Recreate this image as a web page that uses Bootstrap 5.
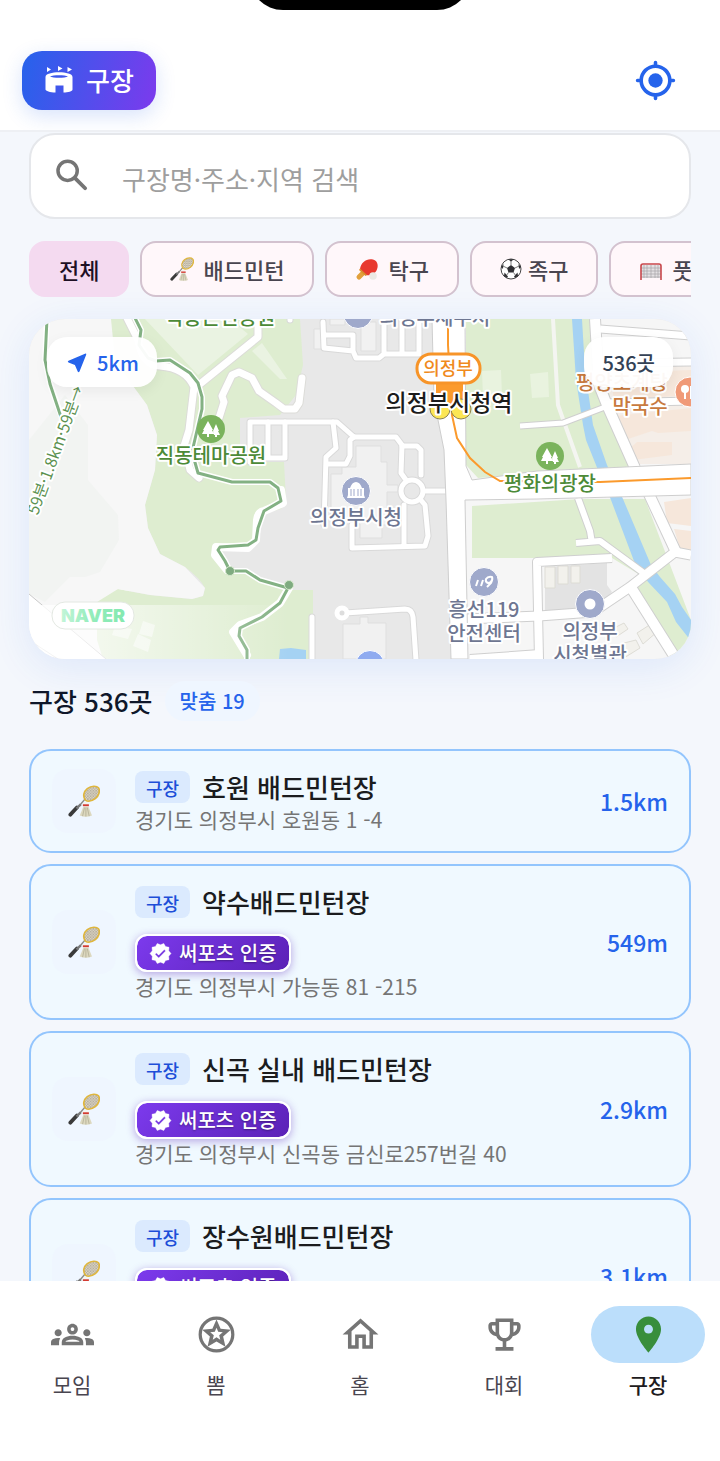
<!DOCTYPE html>
<html lang="ko">
<head>
<meta charset="utf-8">
<meta name="viewport" content="width=device-width, initial-scale=1">
<title>구장</title>
<link href="https://cdn.jsdelivr.net/npm/bootstrap@5.3.0/dist/css/bootstrap.min.css" rel="stylesheet">
<style>
  body { font-family: "Noto Sans CJK KR", sans-serif; background: #f4f7fc; color: #0f172a; }
  .app-header { height: 132px; padding: 30px 22px 0; border-bottom: 2px solid #eef0f4; }
  .notch { top: -58px; width: 222px; height: 68px; border-radius: 34px; background: #000; }
  .brand-btn { height: 59px; padding: 0 22px; gap: 12px; border: 0; border-radius: 20px; color: #fff; font-size: 26px; font-weight: 500; line-height: 36px;
    background: linear-gradient(105deg, #2563eb, #7c3aed); box-shadow: 0 6px 20px rgba(37, 99, 235, .18); }
  .locate-btn { width: 86px; height: 60px; border: 0; color: #2563eb; }
  .scroller { min-height: 0; overflow-y: auto; scrollbar-width: none; padding: 1px 29px 0; }
  .scroller::-webkit-scrollbar, .chip-row::-webkit-scrollbar { display: none; }
  .search-box { height: 86px; border: 2px solid #e5e7eb; border-radius: 26px; background: #fff; padding: 0 20px; gap: 29px; }
  .search-box input { font-size: 26px; height: 62px; padding: 4px 0 0; }
  .search-box input::placeholder { color: #9e9e9e; }
  .chip-row { gap: 11px; margin-top: 22px; overflow-x: auto; scrollbar-width: none; }
  .chip { height: 56px; padding: 0 28px; gap: 9px; border: 2px solid #d3c2cf; border-radius: 16px; background: #fff7fa; color: #49454f; font-size: 22px; font-weight: 500; line-height: 30px; white-space: nowrap; }
  .chip.active { background: #f4daf0; border-color: #f4daf0; color: #1d1024; }
  .chip.tight { gap: 6px; }
  .map-box { height: 340px; margin-top: 22px; border-radius: 36px; overflow: hidden; }
  .map-wrap { border-radius: 36px; box-shadow: 0 8px 40px rgba(37, 99, 235, .11); }
  .map-pill { top: 18px; height: 50px; border: 0; border-radius: 20px; background: rgba(255, 255, 255, .95); font-size: 20px; font-weight: 500; line-height: 30px; box-shadow: 0 4px 14px rgba(0, 0, 0, .06); padding: 2px 18px 0; }
  .radius-pill { left: 18px; gap: 8px; color: #2563eb; }
  .count-pill { right: 18px; color: #334155; }
  .map-box text { font-size: 20px; font-weight: 500; text-anchor: middle; paint-order: stroke; stroke: #fff; stroke-width: 4px; stroke-linejoin: round; }
  .map-box .station-name { font-size: 23px; }
  .map-box .line-name { font-size: 18px; }
  .map-box .trail-name { font-size: 16px; font-weight: 400; }
  .map-box .brand-mark { font-family: Inter, sans-serif; font-size: 18px; font-weight: 900; stroke: none; }
  .fade-panel { fill: url(#fadeWhite); }
  .summary { margin-top: 22px; gap: 12px; }
  .summary h1 { font-size: 26px; font-weight: 500; line-height: 40px; color: #0f172a; }
  .match-pill { background: #eff6ff; color: #2563eb; font-size: 20px; font-weight: 500; line-height: 40px; padding: 0 15px; border-radius: 20px; }
  .court-list { margin-top: 28px; gap: 11px; }
  .court { border: 2px solid #93c5fd; border-radius: 22px; background: #f0f9ff; padding: 18px 21px; gap: 19px; }
  .thumb { width: 64px; height: 64px; border-radius: 16px; background: #eff6ff; }
  .court h2 { font-size: 26px; font-weight: 500; line-height: 36px; color: #1b1c1e; }
  .kind { width: 55px; height: 32px; border-radius: 8px; background: #dbeafe; color: #1d4ed8; font-size: 18px; font-weight: 500; line-height: 34px; }
  .addr { font-size: 21px; line-height: 28px; color: #757575; }
  .dist { font-size: 23px; font-weight: 500; line-height: 36px; color: #2563eb; }
  .cert { height: 38px; margin-top: 14px; padding: 0 12px; gap: 7px; border: 2px solid #fff; border-radius: 12px; color: #fff; font-size: 20px; font-weight: 500; line-height: 28px;
    background: linear-gradient(135deg, #7c3aed, #5b21b6) padding-box; box-shadow: 0 2px 8px rgba(91, 33, 182, .4); text-shadow: 0 1px 2px rgba(0, 0, 0, .35); }
  .tabbar { height: 180px; background: #fff; padding-top: 25px; }
  .tabbar a { color: #49454f; font-size: 21px; line-height: 30px; gap: 6px; }
  .tabbar a.active { color: #1d1b20; font-weight: 500; }
  .tab-ico { width: 114px; height: 57px; border-radius: 29px; color: #757575; }
  .active .tab-ico { background: #bbdefb; color: #388e3c; }
</style>
</head>
<body class="vh-100 d-flex flex-column overflow-hidden">

<svg width="0" height="0" class="position-absolute" aria-hidden="true">
  <defs>
    <pattern id="net" width="3" height="3" patternUnits="userSpaceOnUse"><rect width="3" height="3" fill="#e3dccb"/><path d="M0 0L3 3M3 0L0 3" stroke="#8b8575" stroke-width=".5"/></pattern>
    <symbol id="racket" viewBox="0 0 34 34">
      <path d="M13 21L18 15" stroke="#8b8b86" stroke-width="1.6"/>
      <path d="M2.500 31.500L9.500 24" stroke="#3a3a3a" stroke-width="4" stroke-linecap="round"/>
      <path d="M9 25L13.500 20.500" stroke="#777" stroke-width="2.500"/>
      <path d="M18.500 16C15.500 12 16.500 7 20.500 3.800C25 .5 30.500 .8 32.300 3C34.500 6 32.500 12 29 14.500C25.500 17 21 18 18.500 16Z" fill="url(#net)" stroke="#dfb63d" stroke-width="1.800"/>
      <path d="M16.500 22.500H21.500L25.500 32.500Q19 35 12.500 32.500Z" fill="#dcd8bf"/>
      <path d="M17.500 24L15.500 33M19 24V33.500M20.500 24L22.500 33" stroke="#aaa58c" stroke-width=".7"/>
      <path d="M16 19.500Q19 16.500 22 19.500V23H16Z" fill="#f5f5f0"/><path d="M15.800 20.500H22.200V22.500H15.800Z" fill="#d33b32"/>
    </symbol>
    <symbol id="cert-ico" viewBox="0 0 24 24"><path fill="currentColor" stroke="currentColor" stroke-linejoin="round" stroke-width=".4" d="M23 12l-2.440-2.790.34-3.690-3.610-.82-1.890-3.200L12 2.960 8.600 1.500 6.710 4.690 3.100 5.500l.34 3.700L1 12l2.440 2.790-.34 3.700 3.610.82L8.600 22.500l3.400-1.470 3.400 1.460 1.890-3.190 3.610-.82-.34-3.690L23 12zm-12.910 4.720l-3.800-3.810 1.480-1.480 2.320 2.330 5.850-5.870 1.480 1.480-7.330 7.350z"/></symbol>
    <symbol id="trees" viewBox="-14 -14 28 28"><circle r="14" fill="#7ab35c"/><path d="M-3-8L2 1H1L3 5H-2V8H-4V5H-9L-7 1H-8ZM5-5L8 2H7L9 6H6V8H4V6H3L2 2Z" fill="#fff"/></symbol>
    <linearGradient id="fadeWhite"><stop offset="0" stop-color="#fff" stop-opacity=".85"/><stop offset="1" stop-color="#fff" stop-opacity="0"/></linearGradient>
    <linearGradient id="naverGreen"><stop offset="0" stop-color="#c3f5d8"/><stop offset=".5" stop-color="#93ecba"/><stop offset="1" stop-color="#84e9b0"/></linearGradient>
    <g id="paths">
      <path d="M126 316L138 340Q142 366 160 366Q186 368 194 387L189 430L184 446L190 470L199 478"/>
      <path d="M200 384L258 337V316M219 418L224 402L222 396L232 375L239 372L252 378L259 391L276 403L284 409L295 409L299 403L302 378"/>
    </g>
    <g id="streets">
      <path d="M250 462V422H337L354 437H396L402 445L401 473L406 480"/>
      <path d="M268 422V458M285 422V457M250 458H285M333 422L336 448L326 457L324 525M326 464H346L350 456V440L354 437M402 446H417L421 450V475"/>
      <path d="M352 525V548L425 546L428 536L425 505L420 499M404 545V505M426 491H450"/>
      <path d="M323 322L324 348L353 351L356 358H379L384 354H419V319M326 335H353V351M384 354V319M402 354V319"/>
      <path d="M345 613L405 609Q412 609 413 617L416 660M312 617V660M290 316V320"/>
      <ellipse cx="412" cy="491" rx="11" ry="11"/>
    </g>
    <g id="roads">
      <path d="M595 319L599 385L607 405L635 468" stroke-width="10"/>
      <path d="M520 426L563 423L605 407" stroke-width="5"/>
      <path d="M607 403L691 401M600 329L691 336M610 363L691 362" stroke-width="7"/>
      <path d="M578 498L590 531L592 543M576 543L600 541L645 574" stroke-width="6"/>
      <path d="M612 558L537 562L539 659" stroke-width="8"/>
      <path d="M465 619L539 616L593 612L630 587L675 552L691 555" stroke-width="9"/>
      <path d="M648 492L676 552M632 589L676 659M470 660L540 655" stroke-width="10"/>
    </g>
  </defs>
</svg>

<header class="app-header bg-white position-relative overflow-hidden flex-shrink-0 d-flex align-items-center justify-content-between">
  <div class="notch position-absolute start-50 translate-middle-x"></div>
  <button type="button" class="brand-btn d-flex align-items-center">
    <svg width="30" height="30" viewBox="0 0 30 30" aria-hidden="true">
      <path d="M3 2L7 4.500L3 7ZM14 1L18.500 3.500L14 6ZM23.500 2L28 4.500L23.500 7Z" fill="#fff"/>
      <path fill="#fff" fill-rule="evenodd" d="M1.500 12C1.500 5.800 28.500 5.800 28.500 12V24.500C28.500 26.500 24 27.500 19.500 27.500V20.500H11.500V27.500C6 27.500 1.500 26 1.500 24.500ZM6 11.500C9 13.300 21 13.300 24 11.500C21 9.700 9 9.700 6 11.500Z"/>
    </svg>
    <span>구장</span>
  </button>
  <button type="button" class="locate-btn bg-transparent p-0" aria-label="내 위치">
    <svg width="43" height="43" viewBox="0 0 24 24" fill="none" stroke="currentColor" stroke-width="2" stroke-linecap="round" aria-hidden="true"><circle cx="12" cy="12" r="8"/><circle cx="12" cy="12" r="4" fill="currentColor" stroke="none"/><path d="M12 2V4M12 20V22M2 12H4M20 12H22"/></svg>
  </button>
</header>

<main class="scroller flex-grow-1">
  <div class="search-box d-flex align-items-center">
    <svg class="flex-shrink-0" width="42" height="42" viewBox="0 0 24 24" fill="none" stroke="#757575" stroke-width="2" stroke-linecap="round" aria-hidden="true"><circle cx="9.500" cy="9" r="5.500"/><path d="M14 13.500L19.500 19" stroke-width="2.200"/></svg>
    <input type="text" class="form-control border-0 shadow-none bg-transparent" placeholder="구장명·주소·지역 검색" aria-label="구장 검색">
  </div>

  <div class="chip-row d-flex">
    <button type="button" class="chip active flex-shrink-0">전체</button>
    <button type="button" class="chip flex-shrink-0 d-flex align-items-center"><svg width="24" height="24" aria-hidden="true"><use href="#racket"/></svg>배드민턴</button>
    <button type="button" class="chip flex-shrink-0 d-flex align-items-center">
      <svg width="24" height="24" viewBox="0 0 24 24" aria-hidden="true"><path d="M4 20L10 14" stroke="#e2a03c" stroke-width="5" stroke-linecap="round"/><path d="M5 12C6 5 12 1 18 2.500C23.500 4 23.500 10 21.500 13.500C19 18 13 19 11 18Z" fill="#e8392f"/><path d="M5 11.500L12 18L10.500 19L4 13Z" fill="#d98c2c"/><circle cx="18" cy="19" r="3.800" fill="#ece9e4"/></svg>탁구</button>
    <button type="button" class="chip tight flex-shrink-0 d-flex align-items-center">
      <svg width="22" height="22" viewBox="0 0 22 22" aria-hidden="true"><circle cx="11" cy="11" r="10" fill="#fff" stroke="#444" stroke-width="1"/><path fill="#2f2f33" d="M11 7L15 10L13.500 14.500H8.500L7 10ZM8 1.300H14L11 3.500ZM1 9L3.500 6L3 11ZM21 9L18.500 6L19 11ZM4 18L4.500 14.500L8 18.500L7 20ZM18 18L17.500 14.500L14 18.500L15 20Z"/><path d="M11 7V3M15 10L19 8M13.500 14.500L16 18M8.500 14.500L6 18M7 10L3 8" stroke="#444" stroke-width=".7"/></svg>족구</button>
    <button type="button" class="chip flex-shrink-0 d-flex align-items-center">
      <svg width="24" height="24" viewBox="0 0 24 24" aria-hidden="true"><rect x="2" y="8" width="20" height="13" fill="#e4e1e3"/><path d="M5 8V21M8 8V21M12 8V21M16 8V21M19 8V21M2 11H22M2 14H22M2 17H22M2 20H22" stroke="#a7a3a8" stroke-width=".7"/><path d="M2 23V9Q2 7 4 7H20Q22 7 22 9V23" fill="none" stroke="#c8474b" stroke-width="1.600"/></svg>풋살</button>
  </div>

  <section class="map-wrap">
  <div class="map-box position-relative">
    <svg class="d-block w-100 h-100" viewBox="29 319 662 340" preserveAspectRatio="xMidYMid slice" role="img" aria-label="지도">
      <rect x="29" y="319" width="662" height="340" fill="#e8e8e8"/>
      <!-- terrain -->
      <path d="M29 319H130V659H29Z" fill="#f7f7f7"/>
      <path d="M111 319H300L303 365L296 395L280 415L240 418V462H284L286 500L281 509L262 514L256 540L248 545L222 548L228 570L245 570L262 581L288 588L292 590H313V659H103L97 640V602Q103 590 118 589L150 595L192 599L203 596L205 588Q200 578 185 567L160 554L148 528L145 505L155 470L157 435L147 405L133 386L115 360Z" fill="#deedd0"/>
      <path d="M133 386L60 370V590L97 602L118 589L150 595L192 599L203 596L205 588L185 567L160 554L148 528L145 505L155 470L157 435L147 405Z" fill="#f7f7f7"/>
      <path d="M29 440L65 395L88 425V480L118 515L119 540L100 572L85 577H70L45 602L29 594Z" fill="#f2f4f2"/>
      <path d="M145 319H230L248 334L198 375Z" fill="#eaf3e2"/><path d="M252 351L262 343L287 379H280Z" fill="#eaf3e2"/>
      <path d="M29 594L106 659H29Z" fill="#fff"/><path d="M29 594L106 659M29 640L58 659" stroke="#c9c9c9" fill="none"/>
      <path d="M143 621L155 625L152 637L139 634ZM138 634L151 640L148 652L133 646ZM115 626L132 629L128 639L112 635Z" fill="#eef5e8"/>
      <path d="M280 649L291 648L306 650V659H279Z" fill="#a5d2f3"/>
      <!-- buildings -->
      <path d="M356 446H381V462H387V485H398V492H387V525H382V538H360V524H331V474H342V467H356ZM343 624H360V617H368V623H386V659H343ZM314 329H322V349H314ZM361 322H376V351H361ZM330 319H345V325H330Z" fill="#f1f1f1" stroke="#dfdfdf"/>
      <!-- blocks east of the avenue -->
      <path d="M465 319H691V659H465Z" fill="#f6f6f6"/>
      <path d="M466 319H595L612 405L635 468L537 473L478 478L466 465Z" fill="#deedd0"/>
      <path d="M472 506L580 499H645L691 620V659H670L632 590L640 575L612 558L472 558Z" fill="#deedd0"/>
      <path d="M530 374L548 372L549 397L532 398ZM482 371L501 370L502 396L483 397Z" fill="#e9f3df"/>
      <path d="M553 319L558 405L580 467" fill="none" stroke="#f4f5f1" stroke-width="4"/>
      <path d="M602 366L691 362V464H638L612 404Z" fill="#f5eee8"/>
      <path d="M610 373L691 370V395L614 400ZM615 416L691 408V431L658 433L652 431L625 440ZM628 450L637 442H672V455L633 460ZM664 502L691 498V526L667 523ZM674 529L691 531V550L680 549Z" fill="#f6e7db"/>
      <path d="M545 567L607 563V585L612 592L600 605L545 612Z" fill="#e3e3e3"/>
      <path d="M545 567H555V588H545ZM558 566H568V584H558ZM571 566H580V583H571ZM612 629L624 623L628 629L616 637ZM637 633L651 624L657 632L643 644ZM624 643L636 640L640 648L624 658Z" fill="#f2f1ec" stroke="#dddcd5"/>
      <path d="M572 319H582L585 370L593 425L607 465L623 499L651 565L660 577L675 594L682 607L691 620V641L676 622L667 602L649 583L637 569L611 500L598 470L586 440L583 425L576 380Z" fill="#a5d2f3"/>
      <!-- secondary roads, casing first -->
      <g fill="none" stroke-linecap="round" stroke-linejoin="round">
        <use href="#paths" stroke="#dcdcd8" stroke-width="9"/><use href="#paths" stroke="#fff" stroke-width="7"/>
        <path d="M281 490L283 503L264 511Q258 512 257 520L256 540L248 548L216 547L215 555L227 570M289 588L280 603L262 617L240 625L233 632L247 655" stroke="#fff" stroke-width="8"/>
        <use href="#streets" stroke="#d9d9d9" stroke-width="7"/><use href="#streets" stroke="#fff" stroke-width="5"/>
        <circle cx="342" cy="613" r="5" fill="#ddd" stroke="#fff" stroke-width="5"/>
      </g>
      <g fill="none" stroke-linejoin="round">
        <g stroke="#cfcfcf"><path d="M595 319L599 385L607 405L635 468" stroke-width="12"/><path d="M520 426L563 423L605 407" stroke-width="7"/><path d="M607 403L691 401M600 329L691 336M610 363L691 362" stroke-width="9"/><path d="M578 498L590 531L592 543M576 543L600 541L645 574" stroke-width="8"/><path d="M612 558L537 562L539 659" stroke-width="10"/><path d="M465 619L539 616L593 612L630 587L675 552L691 555" stroke-width="11"/><path d="M648 492L676 552M632 589L676 659M470 660L540 655" stroke-width="12"/></g>
        <use href="#roads" stroke="#fff"/>
      </g>
      <!-- main roads -->
      <path d="M432 319H465L466 466L472 480L537 471L691 464V495L537 499L465 500L468 659H451L446 500L444 450L434 400Z" fill="#fff" stroke="#cecece"/>
      <!-- walking trails -->
      <g fill="none" stroke="#fff" stroke-width="6" stroke-linejoin="round"><path d="M47 319L45 360L50 384L62 418"/><path id="trail" d="M134 316L141 330L139 345L148 358L156 361L170 360L190 373L198 383L202 397V409L192 452L198 473L232 482L270 482L278 488L281 501L264 511L258 528L256 540L248 545L220 547L218 550L225 561L230 571L246 571L260 580L288 588L280 603L262 617L240 628L239 636L247 650V660"/></g>
      <g fill="none" stroke="#83b183" stroke-width="3" stroke-linejoin="round"><path d="M47 319L45 360L50 384L62 420"/><use href="#trail"/></g>
      <g fill="#7fab80" stroke="#d5e8cc"><circle cx="230" cy="571" r="4.500"/><circle cx="289" cy="585" r="4.500"/></g>
      <!-- rail line -->
      <path d="M448 319V345L452 415L457 438L470 458L485 472L500 481L600 482L691 478" fill="none" stroke="#fb9a2c" stroke-width="2"/>
      <path d="M436 380H463V403H436Z" fill="#fb9a2c"/>
      <circle cx="440" cy="409" r="10" fill="#fce654" stroke="#8d8352"/><circle cx="461" cy="409" r="10" fill="#fce654" stroke="#8d8352"/>
      <rect x="417" y="354" width="63" height="29" rx="14" fill="#fff" stroke="#f79428" stroke-width="3"/>
      <!-- markers -->
      <use href="#trees" x="197" y="415" width="28" height="28"/><use href="#trees" x="536" y="442" width="28" height="28"/>
      <g stroke="#fff"><circle cx="356" cy="491" r="14.500" fill="#9fa9cb"/><circle cx="484" cy="582" r="14.500" fill="#9fa9cb"/><circle cx="590" cy="604" r="14.500" fill="#9fa9cb"/><circle cx="358" cy="314" r="14.500" fill="#9fa9cb"/><circle cx="370" cy="665" r="14.500" fill="#8fabf0"/><circle cx="690" cy="392" r="15" fill="#f09a78"/></g>
      <path d="M348 495V488H350Q352 482 356 482Q360 482 362 488H364V495L365 498H347Z" fill="#fff"/><path d="M351 489V496M354 489V496M358 489V496M361 489V496" stroke="#9fa9cb"/>
      <path d="M478 580L476 586M483 580L481 586" fill="none" stroke="#fff" stroke-width="2"/><path d="M492 580Q491 583 488 583Q485 582 486 579Q488 576 492 577Q493 579 491 583L487 587" fill="none" stroke="#fff" stroke-width="2"/>
      <circle cx="590" cy="604" r="5.500" fill="#fff"/><path d="M685 390V399M691 386V399" stroke="#fff" stroke-width="2"/><circle cx="685" cy="389" r="4" fill="#fff"/>
      <!-- labels -->
      <g fill="#4c8a37"><text x="220" y="325">직동근린공원</text><text x="211" y="463">직동테마공원</text><text x="550" y="491">평화의광장</text></g>
      <g fill="#6e7691"><text x="435" y="325">의정부세무서</text><text x="356" y="525">의정부시청</text><text x="484" y="617">흥선119</text><text x="484" y="641">안전센터</text><text x="590" y="639">의정부</text><text x="590" y="662">시청별관</text></g>
      <g fill="#c87a3e"><text x="622" y="390">평양초계탕</text><text x="640" y="414">막국수</text></g>
      <text class="station-name" x="449" y="411" fill="#1c1c1c">의정부시청역</text>
      <text class="line-name" x="448" y="375" fill="#f08a1d">의정부</text>
      <text class="trail-name" transform="translate(61 452) rotate(-70)" fill="#5b9150">59분·1.8km·59분→</text>
      <!-- attribution -->
      <rect class="fade-panel" x="29" y="605" width="260" height="54"/>
      <rect x="52" y="602" width="82" height="27" rx="13" fill="#fff" stroke="#e3e8e2"/>
      <text class="brand-mark" x="93" y="622" fill="url(#naverGreen)">NAVER</text>
    </svg>
    <button type="button" class="map-pill radius-pill position-absolute d-flex align-items-center"><svg width="24" height="24" viewBox="0 0 24 24" fill="currentColor" aria-hidden="true"><path d="M20 2.700Q21.600 2.200 21.200 3.800L14.500 20.500Q13.500 22 12.700 20.500L9.900 14.100L3.500 11.500Q2 10.500 3.500 9.800Z"/></svg>5km</button>
    <div class="map-pill count-pill position-absolute d-flex align-items-center">536곳</div>
  </div>
  </section>

  <div class="summary d-flex align-items-center">
    <h1 class="m-0">구장 536곳</h1>
    <span class="match-pill">맞춤 19</span>
  </div>

  <ul class="court-list list-unstyled d-flex flex-column mb-0">
    <li class="court d-flex align-items-center">
      <div class="thumb flex-shrink-0 d-flex align-items-center justify-content-center"><svg width="32" height="32" aria-hidden="true"><use href="#racket"/></svg></div>
      <div class="flex-grow-1">
        <div class="d-flex align-items-center"><span class="kind text-center me-2">구장</span><h2 class="m-0 ms-1">호원 배드민턴장</h2></div>
        <div class="addr">경기도 의정부시 호원동 1 -4</div>
      </div>
      <div class="dist">1.5km</div>
    </li>
    <li class="court d-flex align-items-center">
      <div class="thumb flex-shrink-0 d-flex align-items-center justify-content-center"><svg width="32" height="32" aria-hidden="true"><use href="#racket"/></svg></div>
      <div class="flex-grow-1">
        <div class="d-flex align-items-center"><span class="kind text-center me-2">구장</span><h2 class="m-0 ms-1">약수배드민턴장</h2></div>
        <div class="d-flex"><span class="cert d-flex align-items-center"><svg width="23" height="23" aria-hidden="true"><use href="#cert-ico"/></svg>써포츠 인증</span></div>
        <div class="addr">경기도 의정부시 가능동 81 -215</div>
      </div>
      <div class="dist">549m</div>
    </li>
    <li class="court d-flex align-items-center">
      <div class="thumb flex-shrink-0 d-flex align-items-center justify-content-center"><svg width="32" height="32" aria-hidden="true"><use href="#racket"/></svg></div>
      <div class="flex-grow-1">
        <div class="d-flex align-items-center"><span class="kind text-center me-2">구장</span><h2 class="m-0 ms-1">신곡 실내 배드민턴장</h2></div>
        <div class="d-flex"><span class="cert d-flex align-items-center"><svg width="23" height="23" aria-hidden="true"><use href="#cert-ico"/></svg>써포츠 인증</span></div>
        <div class="addr">경기도 의정부시 신곡동 금신로257번길 40</div>
      </div>
      <div class="dist">2.9km</div>
    </li>
    <li class="court d-flex align-items-center">
      <div class="thumb flex-shrink-0 d-flex align-items-center justify-content-center"><svg width="32" height="32" aria-hidden="true"><use href="#racket"/></svg></div>
      <div class="flex-grow-1">
        <div class="d-flex align-items-center"><span class="kind text-center me-2">구장</span><h2 class="m-0 ms-1">장수원배드민턴장</h2></div>
        <div class="d-flex"><span class="cert d-flex align-items-center"><svg width="23" height="23" aria-hidden="true"><use href="#cert-ico"/></svg>써포츠 인증</span></div>
        <div class="addr">경기도 의정부시</div>
      </div>
      <div class="dist">3.1km</div>
    </li>
  </ul>
</main>

<nav class="tabbar row g-0 flex-shrink-0">
  <a href="#" class="col d-flex flex-column align-items-center text-decoration-none"><span class="tab-ico d-flex align-items-center justify-content-center"><svg width="43" height="43" viewBox="0 0 24 24" fill="currentColor" aria-hidden="true"><path d="M4 13c1.100 0 2-.9 2-2s-.9-2-2-2-2 .9-2 2 .9 2 2 2zm1.130 1.100c-.37-.06-.74-.1-1.130-.1-.99 0-1.930.21-2.780.58C.48 14.900 0 15.620 0 16.430V18h4.500v-1.610c0-.83.23-1.610.63-2.290zM20 13c1.100 0 2-.9 2-2s-.9-2-2-2-2 .9-2 2 .9 2 2 2zm4 3.430c0-.81-.48-1.530-1.220-1.850-.85-.37-1.790-.58-2.780-.58-.39 0-.76.04-1.130.1.4.68.63 1.460.63 2.290V18H24v-1.570zm-7.760-2.780c-1.170-.52-2.610-.9-4.240-.9-1.630 0-3.070.39-4.240.9C6.680 14.130 6 15.210 6 16.390V18h12v-1.610c0-1.180-.68-2.260-1.760-2.740zM8.070 16c.09-.23.13-.39.91-.69.97-.38 1.990-.56 3.020-.56s2.050.18 3.020.56c.77.3.81.46.91.69H8.070zM12 8c.55 0 1 .45 1 1s-.45 1-1 1-1-.45-1-1 .45-1 1-1m0-2c-1.660 0-3 1.340-3 3s1.340 3 3 3 3-1.340 3-3-1.340-3-3-3z"/></svg></span>모임</a>
  <a href="#" class="col d-flex flex-column align-items-center text-decoration-none"><span class="tab-ico d-flex align-items-center justify-content-center"><svg width="43" height="43" viewBox="0 0 24 24" aria-hidden="true"><circle cx="12" cy="12" r="9.100" fill="none" stroke="currentColor" stroke-width="1.800"/><path fill="currentColor" fill-rule="evenodd" d="M12 3.600L14.300 8.800L20 9.300L15.700 13.100L17 18.900L12 15.900L7 18.900L8.300 13.100L4 9.300L9.700 8.800ZM12 8.200L11.050 10.500L8.500 10.700L10.500 12.400L9.900 14.900L12 13.600L14.100 14.900L13.500 12.400L15.500 10.700L12.950 10.500Z"/></svg></span>뽐</a>
  <a href="#" class="col d-flex flex-column align-items-center text-decoration-none"><span class="tab-ico d-flex align-items-center justify-content-center"><svg width="43" height="43" viewBox="0 0 24 24" fill="currentColor" aria-hidden="true"><path d="M12 5.690l5 4.500V18h-2v-6H9v6H7v-7.810l5-4.500M12 3L2 12h3v8h6v-6h2v6h6v-8h3L12 3z"/></svg></span>홈</a>
  <a href="#" class="col d-flex flex-column align-items-center text-decoration-none"><span class="tab-ico d-flex align-items-center justify-content-center"><svg width="43" height="43" viewBox="0 0 24 24" fill="currentColor" aria-hidden="true"><path d="M19 5h-2V3H7v2H5c-1.100 0-2 .9-2 2v1c0 2.550 1.920 4.630 4.390 4.940.63 1.500 1.980 2.630 3.610 2.960V19H7v2h10v-2h-4v-3.100c1.630-.33 2.980-1.460 3.610-2.960C19.080 12.630 21 10.550 21 8V7c0-1.100-.9-2-2-2zM5 8V7h2v3.820C5.840 10.400 5 9.300 5 8zm7 6c-1.650 0-3-1.350-3-3V5h6v6c0 1.650-1.350 3-3 3zm7-6c0 1.300-.84 2.400-2 2.820V7h2v1z"/></svg></span>대회</a>
  <a href="#" class="active col d-flex flex-column align-items-center text-decoration-none" aria-current="page"><span class="tab-ico d-flex align-items-center justify-content-center"><svg width="43" height="43" viewBox="0 0 24 24" fill="currentColor" aria-hidden="true"><path d="M12 2C8.130 2 5 5.130 5 9c0 5.250 7 13 7 13s7-7.750 7-13c0-3.870-3.130-7-7-7zm0 9.500c-1.380 0-2.500-1.120-2.500-2.500s1.120-2.500 2.500-2.500 2.500 1.120 2.500 2.500-1.120 2.500-2.500 2.500z"/></svg></span>구장</a>
</nav>

<script src="https://cdn.jsdelivr.net/npm/bootstrap@5.3.0/dist/js/bootstrap.bundle.min.js"></script>
</body>
</html>
